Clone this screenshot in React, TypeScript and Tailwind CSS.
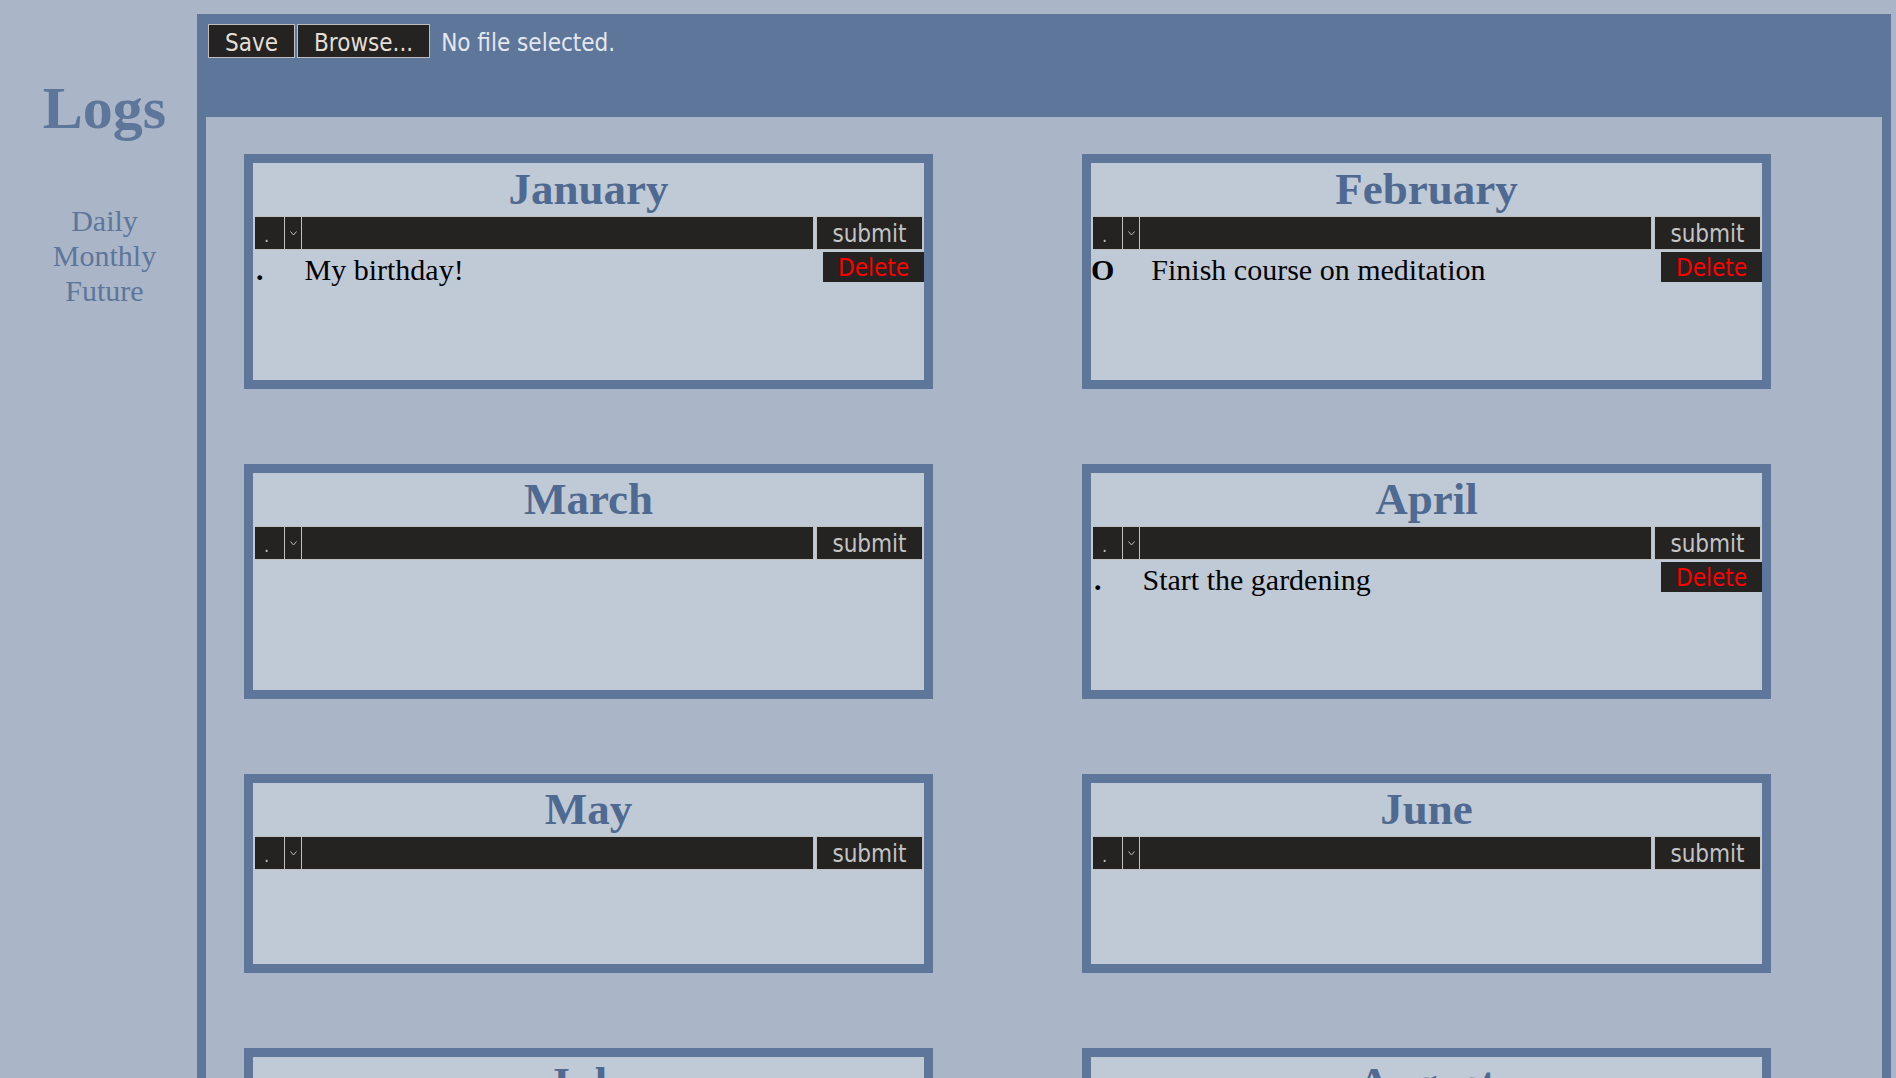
import * as React from "react";

type Entry = { bullet: string; text: string };
type Month = { name: string; items: Entry[] };

const months: Month[] = [
	{ name: "January", items: [{ bullet: ".", text: "My birthday!" }] },
	{ name: "February", items: [{ bullet: "O", text: "Finish course on meditation" }] },
	{ name: "March", items: [] },
	{ name: "April", items: [{ bullet: ".", text: "Start the gardening" }] },
	{ name: "May", items: [] },
	{ name: "June", items: [] },
	{ name: "July", items: [] },
	{ name: "August", items: [] },
	{ name: "September", items: [] },
	{ name: "October", items: [] },
	{ name: "November", items: [] },
	{ name: "December", items: [] },
];

const sans = "font-['DejaVu_Sans_Condensed','DejaVu_Sans',sans-serif]";

function MonthCard({ month, short }: { month: Month; short: boolean }) {
	return (
		<div
			className={
				"mt-[37px] mb-[38px] ml-[38px] w-[689px] border-[9px] border-[#5d769a] bg-[#c0cad7] " +
				(short ? "h-[199px]" : "h-[235px]")
			}
		>
			<div className="text-center font-['Liberation_Serif',serif] text-[45px] font-bold leading-[52px] text-[#4f6990]">
				{month.name}
			</div>
			<div className="mt-[1px] ml-[2px] mr-[1px] flex h-[34px]">
				<div className="flex w-[46px] border-y border-[#c0c0c0] bg-[#242322]">
					<div className={"flex w-[29px] items-end pb-[4px] pl-[9px] text-[18px] leading-none text-[#bcbcbc] " + sans}>
						.
					</div>
					<div className="flex flex-1 items-center justify-center border-l border-[#c0c0c0]">
						<svg width="7" height="5" viewBox="0 0 7 5">
							<path d="M0.5 0.5 L3.5 4 L6.5 0.5" fill="none" stroke="#bcbcbc" strokeWidth="1" />
						</svg>
					</div>
				</div>
				<div className="flex-1 border border-[#c0c0c0] bg-[#242322]" />
				<button
					className={
						"ml-[2px] w-[107px] border border-[#c0c0c0] bg-[#242322] pt-[2px] text-[24px] leading-none text-[#c4c4c4] " +
						sans
					}
				>
					submit
				</button>
			</div>
			{month.items.map((item, i) => (
				<div key={i} className="mt-[2px] font-['Liberation_Serif',serif] text-[30px] leading-[35px] text-black">
					<button
						className={
							"float-right h-[30px] w-[101px] bg-[#242322] pt-[1px] text-[24px] leading-none text-[#ff0000] " + sans
						}
					>
						Delete
					</button>
					<span className={"font-bold " + (item.bullet === "." ? "ml-[3px] mr-[41px]" : "mr-[37px]")}>
						{item.bullet}
					</span>
					<span>{item.text}</span>
				</div>
			))}
		</div>
	);
}

export default function App() {
	return (
		<div className="flex h-screen overflow-hidden bg-[#aab5c8]">
			<div className="w-[197px] shrink-0 pl-[12px] pt-[74px] text-center font-['Liberation_Serif',serif] text-[#5d769a]">
				<div className="text-[60px] font-bold leading-[69px]">Logs</div>
				<nav className="mt-[60px] flex flex-col text-[30px] leading-[35px]">
					<a href="#daily">Daily</a>
					<a href="#monthly">Monthly</a>
					<a href="#future">Future</a>
				</nav>
			</div>
			<div className="mt-[14px] mr-[5px] flex flex-1 flex-col bg-[#5d769a] px-[9px]">
				<div className={"flex h-[103px] shrink-0 items-start pl-[2px] pt-[10px] text-[24px] " + sans}>
					<button className="h-[34px] border border-[#bdbdbd] bg-[#242322] px-[16px] pt-[3px] leading-none text-[#e2ded6]">
						Save
					</button>
					<button className="ml-[2px] h-[34px] border border-[#bdbdbd] bg-[#242322] px-[16px] pt-[3px] leading-none text-[#e2ded6]">
						Browse...
					</button>
					<span className="ml-[11px] flex h-[34px] items-center pt-[3px] leading-none text-[#e4e8ee]">
						No file selected.
					</span>
				</div>
				<div className="grid flex-1 grid-cols-2 content-start bg-[#aab5c8]">
					{months.map((m, i) => (
						<MonthCard key={m.name} month={m} short={i === 4 || i === 5} />
					))}
				</div>
			</div>
		</div>
	);
}
